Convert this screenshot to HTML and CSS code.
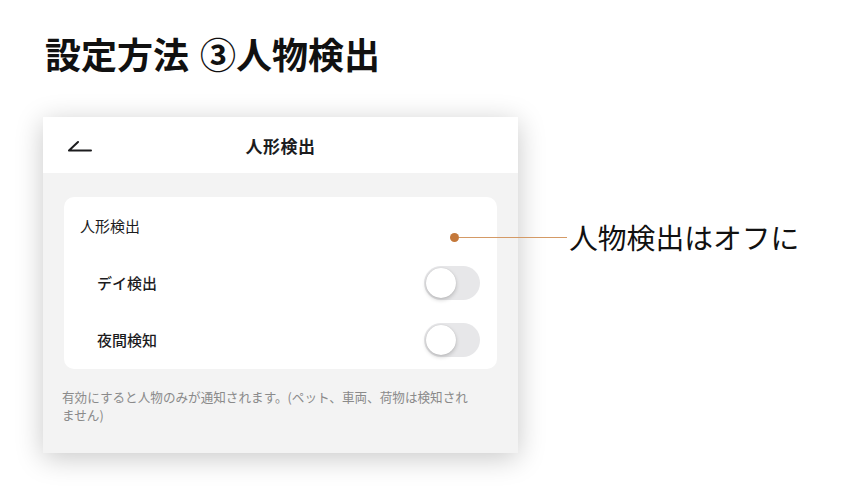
FILE: index.html
```html
<!DOCTYPE html>
<html lang="ja">
<head>
<meta charset="utf-8">
<link rel="stylesheet" href="styles.css">
</head>
<body>
<div class="page">
  <h1 class="title">設定方法<span class="title-step">③人物検出</span></h1>
  <div class="stage">
    <div class="phone">
      <div class="nav">
        <svg class="back" width="24" height="14" viewBox="0 0 24 14">
          <path d="M10 3 L1 11.5 L23 11.5" fill="none" stroke="#1c1c1e" stroke-width="2" stroke-linecap="round" stroke-linejoin="round"/>
        </svg>
        <div class="nav-title">人形検出</div>
      </div>
      <div class="body">
        <div class="group">
          <div class="group-label">人形検出</div>
          <div class="row">
            <span class="row-label">デイ検出</span>
            <span class="toggle"><span class="knob"></span></span>
          </div>
          <div class="row">
            <span class="row-label">夜間検知</span>
            <span class="toggle"><span class="knob"></span></span>
          </div>
        </div>
        <p class="note">有効にすると人物のみが通知されます。(ペット、車両、荷物は検知され<br>ません)</p>
      </div>
    </div>
    <div class="callout">
      <span class="dot"></span>
      <span class="line"></span>
      <span class="callout-text">人物検出はオフに</span>
    </div>
  </div>
</div>
</body>
</html>
```

FILE: styles.css
```css
* { box-sizing: border-box; }
html, body { margin: 0; padding: 0; background: #ffffff; }
body {
  font-family: "Noto Sans CJK JP", "Noto Sans", sans-serif;
  color: #111;
  width: 852px;
  height: 498px;
  overflow: hidden;
}
.page {
  padding: 30px 0 0 45px;
}
.title {
  margin: 0;
  font-size: 36px;
  font-weight: 700;
  line-height: 46px;
  letter-spacing: 0;
  color: #111;
}
.title-step {
  margin-left: 11px;
}
.stage {
  position: relative;
  margin-top: 41px;
  margin-left: -2px;
}
.phone {
  width: 475px;
  height: 336px;
  background: #f3f3f3;
  box-shadow: 0 5px 26px rgba(0, 0, 0, 0.22);
  display: flex;
  flex-direction: column;
}
.nav {
  height: 56px;
  background: #fff;
  display: flex;
  align-items: center;
  justify-content: center;
  position: relative;
}
.back {
  position: absolute;
  left: 25px;
  top: 22px;
}
.nav-title {
  font-size: 17px;
  font-weight: 700;
  letter-spacing: 0.5px;
  color: #1c1c1e;
}
.body {
  padding: 24px 21px 0 21px;
}
.group {
  background: #fff;
  border-radius: 10px;
  padding-bottom: 1px;
}
.group-label {
  padding: 19px 16px 18px 16px;
  font-size: 15px;
  line-height: 20px;
  color: #1c1c1e;
}
.row {
  height: 57px;
  display: flex;
  align-items: center;
  justify-content: space-between;
  padding: 0 17px 0 33px;
}
.row-label {
  font-size: 15px;
  font-weight: 500;
  color: #1c1c1e;
}
.toggle {
  width: 56px;
  height: 34px;
  border-radius: 17px;
  background: #e7e7e9;
  position: relative;
  display: block;
}
.knob {
  position: absolute;
  left: 2px;
  top: 2px;
  width: 30px;
  height: 30px;
  border-radius: 50%;
  background: #fff;
  box-shadow: 0 2px 4px rgba(0, 0, 0, 0.2), 0 0 1px rgba(0, 0, 0, 0.15);
}
.note {
  margin: 19px 0 0 -2px;
  font-size: 12.6px;
  line-height: 18px;
  color: #8a8a8a;
}
.callout {
  position: absolute;
  left: 407px;
  top: 102px;
  display: flex;
  align-items: center;
}
.dot {
  width: 9px;
  height: 9px;
  border-radius: 50%;
  background: #c4783a;
}
.line {
  width: 108px;
  height: 1px;
  background: #d49a66;
}
.callout-text {
  margin-left: 2px;
  font-size: 28.8px;
  font-weight: 400;
  color: #111;
  line-height: 36px;
}
```
